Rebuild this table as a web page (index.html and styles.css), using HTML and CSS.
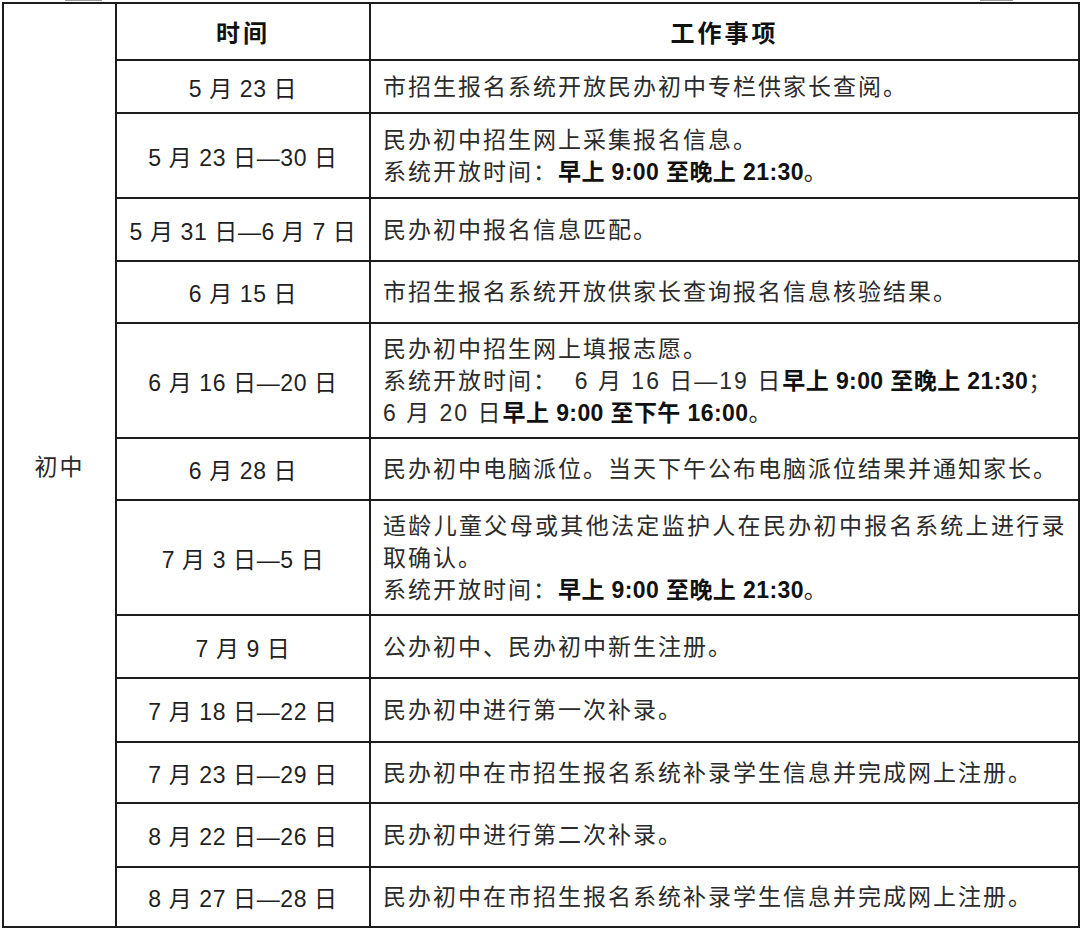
FILE: index.html
```html
<!DOCTYPE html>
<html lang="zh-CN">
<head>
<meta charset="utf-8">
<title>初中招生工作时间表</title>
<link rel="stylesheet" href="styles.css">
</head>
<body>
<div class="marks"><span class="mark mark-left"></span><span class="mark mark-right"></span></div>
<table class="schedule">
  <colgroup>
    <col class="c-stage">
    <col class="c-date">
    <col class="c-task">
  </colgroup>
  <tr class="h57">
    <td class="stage" rowspan="13">初中</td>
    <th class="head">时间</th>
    <th class="head">工作事项</th>
  </tr>
  <tr class="h53">
    <td class="date">5 月 23 日</td>
    <td class="task">市招生报名系统开放民办初中专栏供家长查阅。</td>
  </tr>
  <tr class="h85">
    <td class="date">5 月 23 日—30 日</td>
    <td class="task">民办初中招生网上采集报名信息。<br>系统开放时间：<b>早上 9:00 至晚上 21:30</b>。</td>
  </tr>
  <tr class="h63">
    <td class="date">5 月 31 日—6 月 7 日</td>
    <td class="task">民办初中报名信息匹配。</td>
  </tr>
  <tr class="h62">
    <td class="date">6 月 15 日</td>
    <td class="task">市招生报名系统开放供家长查询报名信息核验结果。</td>
  </tr>
  <tr class="h115">
    <td class="date">6 月 16 日—20 日</td>
    <td class="task">民办初中招生网上填报志愿。<br>系统开放时间：&nbsp; 6 月 16 日—19 日<b>早上 9:00 至晚上 21:30</b>；<br>6 月 20 日<b>早上 9:00 至下午 16:00</b>。</td>
  </tr>
  <tr class="h62">
    <td class="date">6 月 28 日</td>
    <td class="task">民办初中电脑派位。当天下午公布电脑派位结果并通知家长。</td>
  </tr>
  <tr class="h115">
    <td class="date">7 月 3 日—5 日</td>
    <td class="task"><span class="full-line">适龄儿童父母或其他法定监护人在民办初中报名系统上进行录</span>取确认。<br>系统开放时间：<b>早上 9:00 至晚上 21:30</b>。</td>
  </tr>
  <tr class="h63">
    <td class="date">7 月 9 日</td>
    <td class="task">公办初中、民办初中新生注册。</td>
  </tr>
  <tr class="h64">
    <td class="date">7 月 18 日—22 日</td>
    <td class="task">民办初中进行第一次补录。</td>
  </tr>
  <tr class="h61">
    <td class="date">7 月 23 日—29 日</td>
    <td class="task">民办初中在市招生报名系统补录学生信息并完成网上注册。</td>
  </tr>
  <tr class="h64">
    <td class="date">8 月 22 日—26 日</td>
    <td class="task">民办初中进行第二次补录。</td>
  </tr>
  <tr class="h60">
    <td class="date">8 月 27 日—28 日</td>
    <td class="task">民办初中在市招生报名系统补录学生信息并完成网上注册。</td>
  </tr>
</table>
</body>
</html>
```
FILE: styles.css
```css
html, body {
  margin: 0;
  padding: 0;
  background: #ffffff;
}

body {
  font-family: "Liberation Sans", "Noto Sans CJK SC", sans-serif;
  color: #2b2b2b;
  font-size: 23px;
}

.marks {
  height: 2px;
  display: flex;
  align-items: flex-start;
}

.mark {
  display: block;
  height: 1px;
  background: #9a9a9a;
}

.mark-left {
  width: 37px;
  margin-left: 65px;
}

.mark-right {
  width: 33px;
  margin-left: 878px;
}

.schedule {
  border-collapse: collapse;
  table-layout: fixed;
  width: 1076px;
  margin-left: 2px;
}

.c-stage { width: 113px; }
.c-date { width: 254px; }
.c-task { width: 709px; }

.schedule td,
.schedule th {
  border: 2px solid #1c1c1c;
  padding: 0;
  vertical-align: middle;
}

.schedule .head {
  font-size: 24px;
  font-weight: 700;
  letter-spacing: 3px;
  color: #111;
  text-align: center;
}

.schedule .stage {
  text-align: center;
  letter-spacing: 2px;
}

.schedule .date {
  text-align: center;
  letter-spacing: 0.6px;
  color: #1f1f1f;
  white-space: nowrap;
}

.schedule .task {
  text-align: left;
  letter-spacing: 2px;
  line-height: 32px;
  padding: 0 12px 0 12px;
  white-space: nowrap;
}

.task b {
  font-weight: 700;
  color: #111;
  letter-spacing: 0.4px;
}

.full-line {
  display: block;
  text-align: justify;
  text-align-last: justify;
  letter-spacing: 1.4px;
}

.h57 { height: 57px; }
.h53 { height: 53px; }
.h85 { height: 85px; }
.h63 { height: 63px; }
.h62 { height: 62px; }
.h115 { height: 115px; }
.h64 { height: 64px; }
.h61 { height: 61px; }
.h60 { height: 60px; }
```
